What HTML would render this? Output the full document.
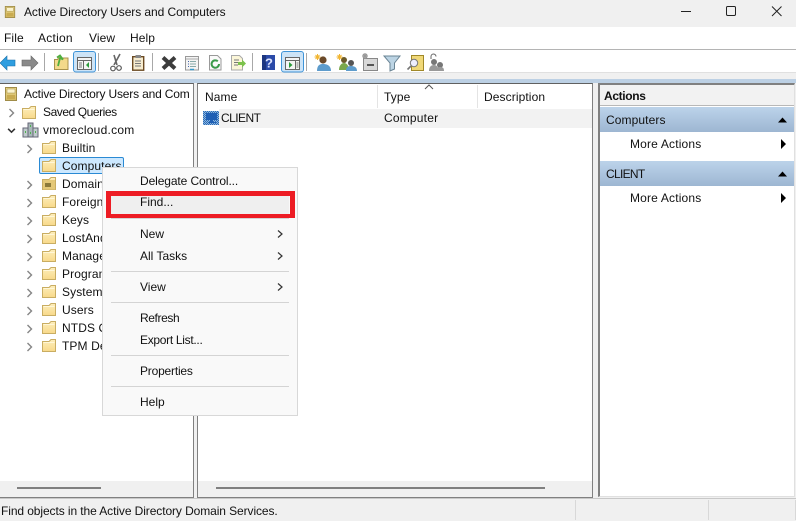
<!DOCTYPE html>
<html><head><meta charset="utf-8"><style>
html,body{margin:0;padding:0;background:#fff}
#p{position:relative;width:796px;height:521px;overflow:hidden;background:#f0f0f0;font:12px/16px "Liberation Sans",sans-serif;color:#111}
#p div,#p svg{position:absolute}
.t{white-space:nowrap;letter-spacing:.1px}
.m{left:140px;white-space:nowrap}
.s{height:1px;background:#d4d4d4;left:111px;width:178px}
</style></head><body><div id="p">
<svg width="0" height="0"><defs>
<linearGradient id="fg" x1="0" y1="0" x2="0" y2="1"><stop offset="0" stop-color="#fdeebc"/><stop offset="1" stop-color="#f8d98a"/></linearGradient>
<linearGradient id="bg" x1="0" y1="0" x2="0" y2="1"><stop offset="0" stop-color="#ecd98e"/><stop offset="1" stop-color="#d3b860"/></linearGradient>
<pattern id="ck" width="2" height="2" patternUnits="userSpaceOnUse"><rect width="2" height="2" fill="#8db4dc"/><rect width="1" height="1" fill="#2a6cb8"/><rect x="1" y="1" width="1" height="1" fill="#2a6cb8"/></pattern>
<symbol id="f" viewBox="0 0 14 14"><path d="M.5 13.500V3.500H7L9 1.500h4.500v12z" fill="url(#fg)" stroke="#c9ad62"/><path d="M1.500 4.500h11" stroke="#fff7d8"/></symbol>
<symbol id="c" viewBox="0 0 8 10"><path d="M1.500 1l4 4-4 4" fill="none" stroke="#858585" stroke-width="1.400"/></symbol>
<symbol id="b" viewBox="0 0 12 14"><rect x=".5" y=".5" width="11" height="13" fill="url(#bg)" stroke="#a08c48"/><rect x="2" y="2" width="8" height="4" fill="#fbf3cc" stroke="#a08c48" stroke-width=".5"/><rect x="2" y="8" width="8" height="4" fill="#c9ab50"/></symbol>
<symbol id="a" viewBox="0 0 8 8"><path d="M1 1l3 3 3-3" transform="translate(0 1.500)" fill="none" stroke="#333" stroke-width="1.400"/></symbol>
</defs></svg>

<!-- title -->
<div style="left:0;top:0;width:796px;height:27px;background:#f0f0f0"></div>
<svg style="left:4px;top:6px" width="12" height="12"><use href="#b" width="12" height="12"/></svg>
<div class="t" style="left:24px;top:4px;letter-spacing:-.07px">Active Directory Users and Computers</div>
<svg style="left:680px;top:5px" width="104" height="16" fill="none" stroke="#222"><path d="M1 6.500h10"/><rect x="46.500" y="1.500" width="9" height="9" rx="1.200"/><path d="M92 1.500l9.500 9.500M101.500 1.500L92 11"/></svg>

<!-- menu -->
<div style="left:0;top:27px;width:796px;height:22px;background:#fff"></div>
<div style="left:0;top:49px;width:796px;height:1px;background:#b4b4b4"></div>
<div class="t" style="left:4px;top:30px">File</div>
<div class="t" style="left:38px;top:30px;letter-spacing:.25px">Action</div>
<div class="t" style="left:89px;top:30px">View</div>
<div class="t" style="left:130px;top:30px">Help</div>

<!-- toolbar -->
<div style="left:0;top:50px;width:796px;height:22px;background:#fff"></div>
<div style="left:0;top:72px;width:796px;height:1px;background:#e0e0e0"></div>
<div style="left:0;top:73px;width:796px;height:6px;background:#f0f0f0"></div>
<div style="left:0;top:79px;width:796px;height:4px;background:#bcd0e4"></div>
<svg style="left:0;top:50px" width="560" height="23">
<path d="M0 13l7-7v4h8v6H7v4z" fill="#2f9ee0" stroke="#1a6fa8" stroke-width=".6"/>
<path d="M38 13l-7-7v4h-9v6h9v4z" fill="#8a8a8a" stroke="#666" stroke-width=".6"/>
<path d="M44.500 3v18M98.500 3v18M152.500 3v18M252.500 3v18M306.500 3v18" stroke="#a8a8a8"/>
<path d="M54.500 9.500h3l1-1.500h9.500v11.500h-13.500z" fill="#f3d98a" stroke="#a8924c"/><path d="M58 16l2-8 3 1.500-3-4-3 2" fill="none" stroke="#4fae3e" stroke-width="1.800"/>
<rect x="73.500" y="1.500" width="22" height="20.500" rx="2.500" fill="#cde4f7" stroke="#3f94d8"/>
<rect x="77.500" y="7.500" width="14" height="12" fill="#f4f4f4" stroke="#666"/><path d="M77.500 10.500h14M83.500 10.500v9" stroke="#666"/><path d="M89 12l-3 3 3 3z" fill="#2a9a3a"/><path d="M79 13h3M79 15h3M79 17h3" stroke="#777"/>
<path d="M120 4l-6 11M114 5l3 10" stroke="#666" stroke-width="1.600"/><circle cx="113" cy="18.500" r="2.300" fill="none" stroke="#555" stroke-width="1.200"/><circle cx="119" cy="18" r="2.300" fill="none" stroke="#555" stroke-width="1.200"/>
<rect x="132.700" y="6.700" width="11" height="13.500" fill="#f6ecd0" stroke="#6b4a22" stroke-width="1.400"/><rect x="135.500" y="5" width="5.500" height="3" fill="#888"/><path d="M135 11h6M135 13.500h6M135 16h6" stroke="#777"/>
<path d="M163 7.500l12 11M175 7.500l-12 11" stroke="#3c3c3c" stroke-width="4"/>
<rect x="185.500" y="6.500" width="13" height="13.500" fill="#f4f4f4" stroke="#999"/><path d="M186 9h12" stroke="#aaa"/><path d="M190 11.500h6M190 14h6M190 16.500h6" stroke="#8aa"/><path d="M188 11.500h1M188 14h1M188 16.500h1" stroke="#46a"/><path d="M190 19.500h4" stroke="#39c" stroke-width="1.500"/>
<path d="M209.500 5.500h8l3.500 3.500v11h-11.500z" fill="#fafafa" stroke="#999"/><path d="M219 14a3.700 3.700 0 1 1-1.200-2.700" fill="none" stroke="#3a9a4a" stroke-width="2"/>
<path d="M231.500 5.500h8l3 3v11.500h-11z" fill="#fbf6d8" stroke="#aaa"/><path d="M234 10h5M234 12.500h4M234 15h4" stroke="#777"/><path d="M238 12h4v-2.500l4 4-4 4V15h-4z" fill="#7cc24a"/>
<rect x="262" y="5" width="13" height="15" fill="#2b4aa8"/><rect x="262" y="5" width="4" height="15" fill="#1d3680"/><text x="265" y="17.500" font-family="Liberation Sans" font-size="13" font-weight="bold" fill="#dfe6ff">?</text>
<rect x="281.500" y="1.500" width="22" height="20.500" rx="2.500" fill="#cde4f7" stroke="#3f94d8"/>
<rect x="285.500" y="7.500" width="14" height="12" fill="#f4f4f4" stroke="#666"/><path d="M285.500 10.500h14M295.500 10.500v9" stroke="#666"/><path d="M289 12l3.500 3-3.500 3z" fill="#2a9a3a"/><path d="M296.500 13h2M296.500 15h2M296.500 17h2" stroke="#777"/>
<circle cx="323" cy="10" r="3.600" fill="#6b4a2a"/><path d="M317 21c0-6 3-7 6-7s8 1 8 7z" fill="#5e9ccc"/><path d="M317.500 4v6M314.500 7h6M315.500 5l4 4M319.500 5l-4 4" stroke="#f2b632"/>
<circle cx="344" cy="10" r="3" fill="#6b5a2a"/><circle cx="351" cy="13" r="3" fill="#555"/><path d="M339 20c0-5 3-7 5-7s5 2 5 7z" fill="#7aa84c"/><path d="M346 21c0-4 2-5 5-5s6 1 6 5z" fill="#5e9ccc"/><path d="M339.500 4v6M336.500 7h6M337.500 5l4 4M341.500 5l-4 4" stroke="#f2b632"/>
<rect x="363.500" y="8.500" width="14" height="12" fill="#d8d8d8" stroke="#888"/><path d="M367 15h7" stroke="#555" stroke-width="2"/><path d="M365 3v6M362 6h6M363 4l4 4M367 4l-4 4" stroke="#999" stroke-width="1.300"/>
<path d="M384 6h16l-5.500 7v6l-4.500 2v-8z" fill="#bcd4e4" stroke="#6a8494"/>
<rect x="411.500" y="5.500" width="12" height="15" fill="#f0d878" stroke="#a08828"/><circle cx="414" cy="13" r="3.700" fill="#eef" stroke="#777"/><path d="M411 16l-3.500 3.500" stroke="#777" stroke-width="1.600"/>
<circle cx="434" cy="12" r="3" fill="#777"/><circle cx="440" cy="15" r="3" fill="#777"/><path d="M429 21c0-4 2-6 5-6s4 2 4 6zM435 21c0-3 2-4 5-4s4 1 4 4z" fill="#999"/><path d="M431 9V6.500a2.500 2.500 0 0 1 5 0" fill="none" stroke="#666"/>
</svg>

<!-- left panel -->
<div style="left:0;top:83px;width:194px;height:415px;background:#fff;border-top:1px solid #606060;border-right:1px solid #808080;border-bottom:1px solid #808080;box-sizing:border-box"></div>
<div style="left:0;top:481px;width:193px;height:16px;background:#f0f0f0"></div>
<div style="left:17px;top:487px;width:84px;height:2px;background:#808080"></div>

<svg style="left:5px;top:87px" width="12" height="14"><use href="#b" width="12" height="14"/></svg>
<div class="t" style="left:24px;top:86px;letter-spacing:-.17px">Active Directory Users and Com</div>
<svg style="left:8px;top:108px" width="8" height="10"><use href="#c"/></svg>
<svg style="left:22px;top:105px" width="14" height="14"><use href="#f" width="14" height="14"/></svg>
<div class="t" style="left:43px;top:104px;letter-spacing:-.44px">Saved Queries</div>
<svg style="left:7px;top:126px" width="10" height="10"><use href="#a" width="9" height="9"/></svg>
<svg style="left:22px;top:122px" width="17" height="16"><rect x="6" y="1" width="5" height="14" fill="#a8b8b8" stroke="#667"/><rect x="1" y="6" width="5" height="9" fill="#c0cccc" stroke="#667"/><rect x="11" y="6" width="5" height="9" fill="#c0cccc" stroke="#667"/><path d="M3 10h1M8 4h1M8 11h1M13 10h1" stroke="#4fb04f" stroke-width="2"/></svg>
<div class="t" style="left:43px;top:122px;letter-spacing:.25px">vmorecloud.com</div>

<!-- selected Computers -->
<div style="left:39px;top:157px;width:85px;height:17px;background:#cce8ff;border:1px solid #2a8ad4;border-radius:2px;box-sizing:border-box"></div>

<svg style="left:26px;top:144px" width="8" height="210"><use href="#c" y="0" width="8" height="10"/><use href="#c" y="36" width="8" height="10"/><use href="#c" y="54" width="8" height="10"/><use href="#c" y="72" width="8" height="10"/><use href="#c" y="90" width="8" height="10"/><use href="#c" y="108" width="8" height="10"/><use href="#c" y="126" width="8" height="10"/><use href="#c" y="144" width="8" height="10"/><use href="#c" y="162" width="8" height="10"/><use href="#c" y="180" width="8" height="10"/><use href="#c" y="198" width="8" height="10"/></svg>
<svg style="left:42px;top:140px" width="14" height="216">
<use href="#f" y="0" width="14" height="14"/><use href="#f" y="18" width="14" height="14"/><use href="#f" y="36" width="14" height="14"/><use href="#f" y="54" width="14" height="14"/><use href="#f" y="72" width="14" height="14"/><use href="#f" y="90" width="14" height="14"/><use href="#f" y="108" width="14" height="14"/><use href="#f" y="126" width="14" height="14"/><use href="#f" y="144" width="14" height="14"/><use href="#f" y="162" width="14" height="14"/><use href="#f" y="180" width="14" height="14"/><use href="#f" y="198" width="14" height="14"/>
<rect x="1" y="40" width="12" height="9.500" fill="#e4c878"/><rect x="3" y="43" width="6" height="4" fill="#8c7a3a"/>
</svg>
<div class="t" style="left:62px;top:140px">Builtin</div>
<div class="t" style="left:62px;top:158px">Computers</div>
<div class="t" style="left:62px;top:176px">Domain</div>
<div class="t" style="left:62px;top:194px">Foreign</div>
<div class="t" style="left:62px;top:212px">Keys</div>
<div class="t" style="left:62px;top:230px">LostAnd</div>
<div class="t" style="left:62px;top:248px">Manage</div>
<div class="t" style="left:62px;top:266px">Program</div>
<div class="t" style="left:62px;top:284px">System</div>
<div class="t" style="left:62px;top:302px">Users</div>
<div class="t" style="left:62px;top:320px">NTDS C</div>
<div class="t" style="left:62px;top:338px">TPM De</div>

<!-- middle panel -->
<div style="left:197px;top:83px;width:396px;height:415px;background:#fff;border-top:1px solid #606060;border-left:1px solid #808080;border-right:1px solid #808080;border-bottom:1px solid #808080;box-sizing:border-box"></div>
<div style="left:198px;top:481px;width:394px;height:16px;background:#f0f0f0"></div>
<div style="left:216px;top:487px;width:329px;height:2px;background:#808080"></div>
<div style="left:377px;top:85px;width:1px;height:23px;background:#e4e4e4"></div>
<div style="left:477px;top:85px;width:1px;height:23px;background:#e4e4e4"></div>
<div style="left:219px;top:109px;width:373px;height:19px;background:#f2f2f2"></div>
<div class="t" style="left:205px;top:89px">Name</div>
<div class="t" style="left:384px;top:89px">Type</div>
<div class="t" style="left:484px;top:89px">Description</div>
<svg style="left:424px;top:84px" width="10" height="6"><path d="M1 5l4-4 4 4" fill="none" stroke="#555"/></svg>
<svg style="left:203px;top:111px" width="16" height="14"><rect width="16" height="14" fill="url(#ck)"/><path d="M3 2h11v7H3zM7 9h3v2h3v1H5v-1h2z" fill="#1f5fb4"/></svg>
<div class="t" style="left:221px;top:110px;letter-spacing:-.55px">CLIENT</div>
<div class="t" style="left:384px;top:110px;letter-spacing:.2px">Computer</div>

<!-- actions panel -->
<div style="left:598px;top:83px;width:197px;height:414px;background:#fff;border-top:2px solid #808080;border-left:2px solid #808080;border-right:1px solid #e0e0e0;border-bottom:1px solid #e0e0e0;box-sizing:border-box"></div>
<div style="left:600px;top:85px;width:194px;height:20px;background:#f2f2f2;border-bottom:1px solid #b8b8b8"></div>
<div class="t" style="left:604px;top:88px;font-weight:bold;letter-spacing:-.35px">Actions</div>
<div style="left:600px;top:107px;width:194px;height:25px;background:linear-gradient(#bcd3ea,#9db6d2)"></div>
<div style="left:600px;top:161px;width:194px;height:25px;background:linear-gradient(#bcd3ea,#9db6d2)"></div>
<div class="t" style="left:606px;top:112px">Computers</div>
<div class="t" style="left:606px;top:166px;letter-spacing:-.7px">CLIENT</div>
<div class="t" style="left:630px;top:136px;letter-spacing:.17px">More Actions</div>
<div class="t" style="left:630px;top:190px;letter-spacing:.17px">More Actions</div>
<svg style="left:776px;top:115px" width="14" height="90"><path d="M2 7.500l4.500-5 4.500 5zM2 61.500l4.500-5 4.500 5zM5 24l5 5-5 5zM5 78l5 5-5 5z" fill="#000"/></svg>

<!-- status -->
<div style="left:0;top:498px;width:796px;height:23px;background:#f0f0f0"></div>
<div style="left:0;top:498px;width:796px;height:1px;background:#c8c8c8"></div>
<div style="left:575px;top:500px;width:1px;height:20px;background:#d8d8d8"></div>
<div style="left:708px;top:500px;width:1px;height:20px;background:#d8d8d8"></div>
<div style="left:795px;top:500px;width:1px;height:20px;background:#d8d8d8"></div>
<div class="t" style="left:1px;top:503px;letter-spacing:-.09px">Find objects in the Active Directory Domain Services.</div>

<!-- context menu -->
<div style="left:102px;top:167px;width:196px;height:249px;background:#f9f9f9;border:1px solid #d8d8d8;box-sizing:border-box"></div>
<div style="left:111px;top:194px;width:178px;height:20px;background:#efefef"></div>
<div class="m" style="top:173px;letter-spacing:-.1px">Delegate Control...</div>
<div class="m" style="top:194px">Find...</div>
<div class="m" style="top:226px">New</div>
<div class="m" style="top:248px">All Tasks</div>
<div class="m" style="top:279px">View</div>
<div class="m" style="top:310px;letter-spacing:-.4px">Refresh</div>
<div class="m" style="top:332px;letter-spacing:-.3px">Export List...</div>
<div class="m" style="top:363px;letter-spacing:-.2px">Properties</div>
<div class="m" style="top:394px">Help</div>
<div class="s" style="top:218px"></div>
<div class="s" style="top:271px"></div>
<div class="s" style="top:302px"></div>
<div class="s" style="top:355px"></div>
<div class="s" style="top:386px"></div>
<svg style="left:276px;top:229px" width="8" height="64"><path d="M2 1.500l4 3.500-4 3.500M2 23.500l4 3.500-4 3.500M2 54.500l4 3.500-4 3.500" fill="none" stroke="#333" stroke-width="1.200"/></svg>
<div style="left:106px;top:191px;width:189px;height:27px;border:5px solid #ed1c24;border-bottom-width:4px;box-sizing:border-box"></div>
</div></body></html>
